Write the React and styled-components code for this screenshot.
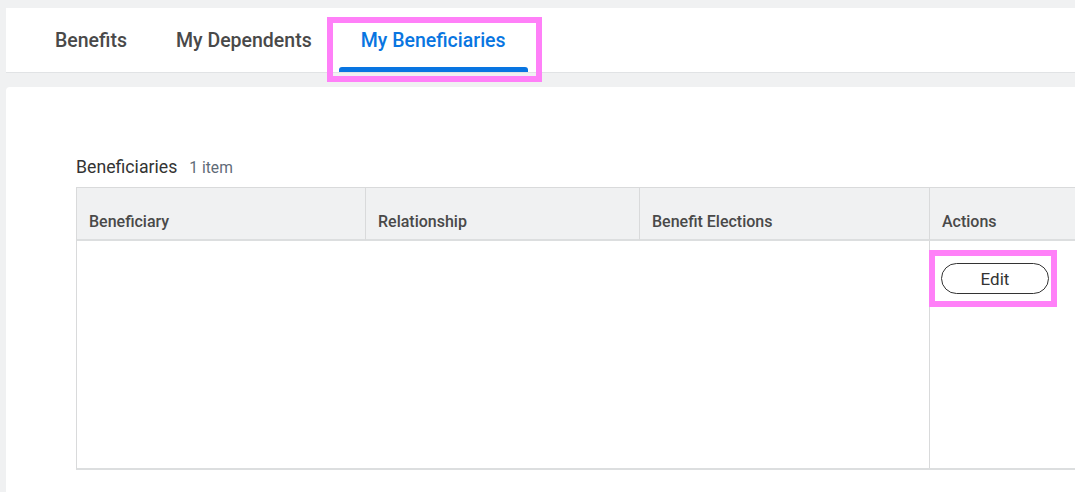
import React from 'react'
import styled, { createGlobalStyle } from 'styled-components'

const GlobalStyle = createGlobalStyle`
  html, body {
    margin: 0;
    padding: 0;
    background: #f0f1f2;
    font-family: Roboto, "Liberation Sans", Arial, sans-serif;
  }
`

const Page = styled.div`
  height: 100vh;
  padding: 8px 0 0 6px;
  box-sizing: border-box;
  overflow: hidden;
  background: #f0f1f2;
`

const TabBar = styled.div`
  display: flex;
  align-items: stretch;
  height: 64px;
  padding-left: 24.5px;
  background: #fff;
  border-bottom: 1px solid #e1e3e5;
`

const Tab = styled.div`
  position: relative;
  display: flex;
  align-items: center;
  margin: 0 2.5px;
  padding: 0 22px;
  font-size: 19.5px;
  font-weight: 500;
  color: ${p => (p.$active ? '#0875e1' : '#494949')};

  &::after {
    content: '';
    display: ${p => (p.$active ? 'block' : 'none')};
    position: absolute;
    left: 0;
    right: 0;
    bottom: 0;
    height: 5px;
    border-radius: 3px 3px 0 0;
    background: #0875e1;
  }
`

const Highlight = styled.div`
  position: absolute;
  left: ${p => p.$left}px;
  top: ${p => p.$top}px;
  width: ${p => p.$width}px;
  height: ${p => p.$height}px;
  border: 6px solid #ff80f8;
  box-sizing: border-box;
  pointer-events: none;
  z-index: 2;
`

const Panel = styled.div`
  margin-top: 14px;
  height: 100%;
  padding: 70px 0 0 70px;
  background: #fff;
  border-radius: 4px 0 0 0;
  overflow: hidden;
`

const Heading = styled.div`
  display: flex;
  align-items: baseline;
  gap: 12px;
  height: 30px;
`

const Title = styled.span`
  font-size: 17.7px;
  color: #333;
`

const Count = styled.span`
  font-size: 15.6px;
  color: #5f6b77;
`

const Table = styled.div`
  display: grid;
  grid-template-columns: 288px 274px 290px 320px;
  grid-template-rows: 53px 227px;
  border-top: 1px solid #d9dadb;
  border-left: 1px solid #d9dadb;
  border-bottom: 2px solid #dcdedf;
`

const HeadCell = styled.div`
  display: flex;
  align-items: flex-end;
  padding: 0 12px 8px;
  background: #f0f1f2;
  border-bottom: 2px solid #dcdedf;
  border-left: ${p => (p.$first ? 'none' : '1px solid #d9dadb')};
  font-size: 16px;
  font-weight: 500;
  color: #494949;
`

const BodyCell = styled.div`
  position: relative;
  padding: 22px 11px 0;
  border-left: ${p => (p.$divider ? '1px solid #d9dadb' : 'none')};
`

const EditButton = styled.button`
  display: block;
  width: 108px;
  height: 31px;
  padding: 0;
  border: 1px solid #333;
  border-radius: 16px;
  background: #fff;
  font-family: Roboto, "Liberation Sans", Arial, sans-serif;
  font-size: 17px;
  font-weight: 400;
  color: #333;
`

const ButtonWrap = styled.div`
  position: relative;
  width: 108px;
`

const columns = ['Beneficiary', 'Relationship', 'Benefit Elections', 'Actions']

export default function App() {
  return (
    <Page>
      <GlobalStyle />
      <TabBar>
        <Tab>Benefits</Tab>
        <Tab>My Dependents</Tab>
        <Tab $active>
          My Beneficiaries
          <Highlight $left={-12} $top={9} $width={215} $height={65} />
        </Tab>
      </TabBar>
      <Panel>
        <Heading>
          <Title>Beneficiaries</Title>
          <Count>1 item</Count>
        </Heading>
        <Table>
          {columns.map((c, i) => (
            <HeadCell key={c} $first={i === 0}>{c}</HeadCell>
          ))}
          <BodyCell />
          <BodyCell />
          <BodyCell />
          <BodyCell $divider>
            <ButtonWrap>
              <EditButton>Edit</EditButton>
              <Highlight $left={-12} $top={-13} $width={128} $height={57} />
            </ButtonWrap>
          </BodyCell>
        </Table>
      </Panel>
    </Page>
  )
}
